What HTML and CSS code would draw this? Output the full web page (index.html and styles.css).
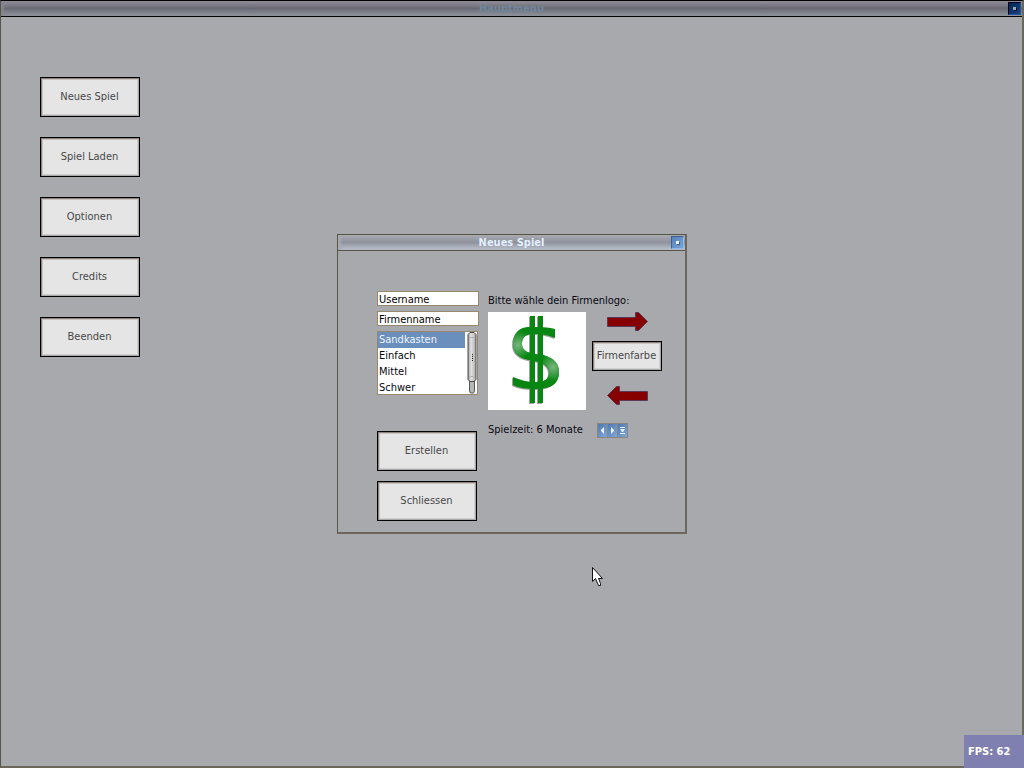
FILE: index.html
```
<!DOCTYPE html>
<html lang="de">
<head>
    <meta charset="UTF-8">
    <meta name="viewport" content="width=device-width, initial-scale=1.0">
    <title>Hauptmenü</title>
    <link rel="stylesheet" href="styles.css">
</head>
<body>
    <main class="window main-window">
        <header class="titlebar">
            <h1>Hauptmenü</h1>
            <button class="window-button" type="button" aria-label="Hauptmenü schließen"></button>
        </header>
        <nav class="menu">
            <button class="button" type="button">Neues Spiel</button>
            <button class="button" type="button">Spiel Laden</button>
            <button class="button" type="button">Optionen</button>
            <button class="button" type="button">Credits</button>
            <button class="button" type="button">Beenden</button>
        </nav>
    </main>

    <section class="window dialog">
        <header class="titlebar">
            <h2>Neues Spiel</h2>
            <button class="window-button" type="button" aria-label="Neues Spiel schließen"></button>
        </header>
        <form class="dialog-body">
            <div class="settings">
                <input class="field" type="text" value="Username" aria-label="Username">
                <input class="field" type="text" value="Firmenname" aria-label="Firmenname">
                <div class="listbox">
                    <select size="4" aria-label="Schwierigkeit">
                        <option selected>Sandkasten</option>
                        <option>Einfach</option>
                        <option>Mittel</option>
                        <option>Schwer</option>
                    </select>
                    <svg class="scrollbar" width="10" height="62" viewBox="0 0 10 62" aria-hidden="true">
                        <defs>
                            <linearGradient id="thumb">
                                <stop offset="0" stop-color="#a2a2a4"/>
                                <stop offset="0.4" stop-color="#e2e2e2"/>
                                <stop offset="1" stop-color="#a8a8aa"/>
                            </linearGradient>
                        </defs>
                        <path d="M2.500 46v13l1 2h3l1-2v-13z" fill="#b4b8b6" stroke="#555"/>
                        <path d="M3 .5h4l2 2v45l-2 2h-4l-2-2v-45z" fill="url(#thumb)" stroke="#4a4646"/>
                        <path d="M2 5.500h6M2 44.500h6" stroke="#b2b2b2"/>
                        <path d="M5 22h1v1h-1zM5 24h1v1h-1zM5 26h1v1h-1zM5 28h1v1h-1z" fill="#222"/>
                    </svg>
                </div>
                <div class="actions">
                    <button class="button" type="button">Erstellen</button>
                    <button class="button" type="button">Schliessen</button>
                </div>
            </div>

            <div class="company">
                <p class="caption">Bitte wähle dein Firmenlogo:</p>
                <div class="logo-row">
                    <svg class="logo" width="98" height="98" viewBox="0 0 98 98" role="img" aria-label="Dollar">
                        <defs>
                            <radialGradient id="shineTop" gradientUnits="userSpaceOnUse" cx="30" cy="33" r="14">
                                <stop offset="0" stop-color="#79b77f"/>
                                <stop offset="1" stop-color="#078711"/>
                            </radialGradient>
                            <radialGradient id="shineBottom" gradientUnits="userSpaceOnUse" cx="65" cy="55" r="14">
                                <stop offset="0" stop-color="#79b77f"/>
                                <stop offset="1" stop-color="#078711"/>
                            </radialGradient>
                            <path id="curve" d="M67 17v9C58 22 50 22 44 22C37 22 34 26 34 32C34 38 39 41 47 42C62 43 71 49 71 60C71 72 62 77 48 77C38 77 31 76 25 73v-8C32 68 40 70 47 70C57 70 61 67 61 61C61 54 56 51 46 49C32 47 25 42 25 32C25 21 33 15 45 15C53 15 58 15 67 17z"/>
                        </defs>
                        <rect width="98" height="98" fill="#fff"/>
                        <g transform="translate(-1 1)" fill="#a0a0a0">
                            <use href="#curve"/>
                            <path d="M42 4h5v87h-5zM50 4h5v87h-5z"/>
                        </g>
                        <use href="#curve" fill="#078711"/>
                        <path d="M42 15C31 15 25 21 25 32C25 41 31 46 42 48v-7C37 39 34 37 34 32C34 26 37 23 42 22z" fill="url(#shineTop)"/>
                        <path d="M55 43C66 46 71 51 71 60C71 69 66 74 58 76l-3-7C60 68 61 65 61 61C61 55 59 53 55 51z" fill="url(#shineBottom)"/>
                        <path d="M42 4h5v87h-5zM50 4h5v87h-5z" fill="#078711"/>
                    </svg>
                    <div class="logo-controls">
                        <button class="arrow" type="button" aria-label="Nächstes Logo">
                            <svg width="41" height="20" viewBox="0 0 41 20">
                                <path d="M.5 5.500h28v-5h3l9 9-9 9h-3v-4h-28z" fill="#870000" stroke="#583a58"/>
                            </svg>
                        </button>
                        <button class="button color-button" type="button">Firmenfarbe</button>
                        <button class="arrow" type="button" aria-label="Vorheriges Logo">
                            <svg width="41" height="20" viewBox="0 0 41 20">
                                <path d="M40.500 5.500h-28v-5h-3l-9 9 9 9h3v-4h28z" fill="#870000" stroke="#583a58"/>
                            </svg>
                        </button>
                    </div>
                </div>
                <div class="duration">
                    <p class="caption">Spielzeit: 6 Monate</p>
                    <div class="spinner">
                        <button type="button" aria-label="Weniger"><svg width="9" height="13" viewBox="0 0 9 13"><path d="M6 3v7l-3-3v-1z"/></svg></button>
                        <button type="button" aria-label="Mehr"><svg width="9" height="13" viewBox="0 0 9 13"><path d="M3 3v7l3-3v-1z"/></svg></button>
                        <button type="button" aria-label="Liste"><svg width="9" height="13" viewBox="0 0 9 13"><path d="M2 3h5v1h-5zM2 5h5l-2 3h-1zM2 9h5v1h-5z"/></svg></button>
                    </div>
                </div>
            </div>
        </form>
    </section>

    <svg class="cursor" width="12" height="20" viewBox="0 0 12 20" aria-hidden="true">
        <path d="M.5 .5v14l3-3 3 7h2v-2l-2-5h4z" fill="#fff" stroke="#111"/>
    </svg>
    <div class="fps">FPS: 62</div>
</body>
</html>
```

FILE: styles.css
```
* {
    margin: 0;
    padding: 0;
    box-sizing: border-box;
}

body {
    position: relative;
    min-height: 100vh;
    background-color: #a8a9ac;
    color: #080812;
    font-family: "DejaVu Sans Condensed", "DejaVu Sans", sans-serif;
    font-stretch: condensed;
    font-size: 11px;
    line-height: 16px;
    overflow: hidden;
}

button, input, select {
    font: inherit;
    border-radius: 0;
}

.window {
    border: 1px solid #575448;
    border-right: 2px solid #6b675c;
    border-bottom: 2px solid #6b675c;
}

.main-window {
    min-height: 100vh;
    border-top-color: #000;
}

.titlebar {
    display: flex;
    align-items: flex-start;
    height: 16px;
    padding: 1px 1px 0 14px;
    border-bottom: 1px solid #575448;
    background: linear-gradient(#a9a9b0, #8f939e 50%, #bec4d0);
    box-shadow: inset 3px 0 3px #a9abb3;
}

.titlebar h1,
.titlebar h2 {
    flex: 1;
    font-size: 11px;
    line-height: 14px;
    font-weight: bold;
    text-align: center;
    color: #e4efff;
}

.main-window .titlebar {
    border-color: #000;
    background: linear-gradient(#938e99, #696a75 50%, #92959d);
    box-shadow: inset 3px 0 3px #858590;
}

.main-window h1 {
    line-height: 13px;
    color: #71869a;
}

.window-button {
    position: relative;
    width: 13px;
    height: 13px;
    border: 1px solid #3c6294;
    border-right-color: #8fbaf0;
    border-bottom-color: #8fbaf0;
    background: linear-gradient(135deg, #5582b8, #7ba3d6);
}

.window-button::after {
    content: '';
    position: absolute;
    top: 4px;
    left: 4px;
    width: 3px;
    height: 3px;
    background-color: #e8f5ff;
    box-shadow: 1px 1px #3e608e;
}

.main-window .window-button {
    border-color: #00001c #285498 #285498 #00001c;
    background: linear-gradient(135deg, #052450, #134584);
}

.main-window .window-button::after {
    background-color: #94a8b8;
    box-shadow: 1px 1px #000018;
}

.menu {
    display: flex;
    flex-direction: column;
    align-items: flex-start;
    gap: 20px;
    padding: 60px 39px;
}

.button {
    width: 100px;
    height: 40px;
    padding-right: 1px;
    border: 1px solid #000;
    background-color: #e5e5e5;
    box-shadow: inset 1px 1px #8d827e, inset -1px -1px #aaa8a8, inset 2px 2px #c9c5c5, inset -2px -2px #cfcfcf;
    color: #484848;
}

.dialog {
    position: absolute;
    top: 50%;
    left: 50%;
    width: 350px;
    transform: translate(-50%, -50%);
    background-color: #a8a9ac;
}

.dialog-body {
    display: flex;
    gap: 9px;
    padding: 40px 23px 11px 39px;
}

.settings {
    display: flex;
    flex-direction: column;
    flex-shrink: 0;
    gap: 5px;
    width: 102px;
}

.field {
    width: 100%;
    height: 15px;
    padding: 1px 1px 0;
    border: 1px solid #978770;
    background-color: #fff;
    color: #000;
    line-height: 13px;
}

.listbox {
    position: relative;
    width: 101px;
    height: 64px;
    border: 1px solid #978770;
    background-color: #fff;
    overflow: hidden;
}

.listbox select {
    display: block;
    width: 87px;
    height: 64px;
    border: none;
    outline: none;
    background-color: #fff;
    overflow: hidden;
    appearance: none;
    scrollbar-width: none;
}

.listbox option {
    height: 16px;
    min-height: 16px;
    padding: 1px 1px 0;
    line-height: 15px;
    color: #080812;
}

.listbox option:checked {
    background: linear-gradient(#6b8fbc, #6b8fbc);
    color: #f0f5ff;
}

.scrollbar {
    position: absolute;
    top: 0;
    right: 0;
}

.actions {
    display: flex;
    flex-direction: column;
    gap: 10px;
    margin-top: 31px;
}

.company {
    flex: 1;
    min-width: 0;
}

.caption {
    height: 20px;
    line-height: 20px;
    white-space: nowrap;
}

.logo-row {
    display: flex;
    gap: 6px;
    margin-top: 1px;
}

.logo {
    display: block;
}

.logo-controls {
    display: flex;
    flex-direction: column;
    align-items: center;
    gap: 9px;
}

.arrow {
    width: 41px;
    height: 20px;
    border: none;
    background: none;
}

.arrow svg,
.spinner svg {
    display: block;
}

.color-button {
    width: 70px;
    height: 30px;
    margin-bottom: 6px;
}

.duration {
    display: flex;
    align-items: flex-start;
    justify-content: space-between;
    margin-top: 10px;
    padding-right: 34px;
}

.spinner {
    display: flex;
    gap: 1px;
    margin-top: 3px;
    padding: 1px;
    background-color: #8c857d;
}

.spinner button {
    width: 9px;
    height: 13px;
    border: none;
    background: linear-gradient(135deg, #4d78b0, #80a9dc);
}

.spinner path {
    fill: #eaf5ff;
}

.cursor {
    position: absolute;
    top: 567px;
    left: 592px;
}

.fps {
    position: absolute;
    right: 0;
    bottom: 0;
    width: 60px;
    height: 33px;
    padding-left: 4px;
    background-color: #8080b0;
    color: #fff;
    font-weight: bold;
    line-height: 34px;
}
```
